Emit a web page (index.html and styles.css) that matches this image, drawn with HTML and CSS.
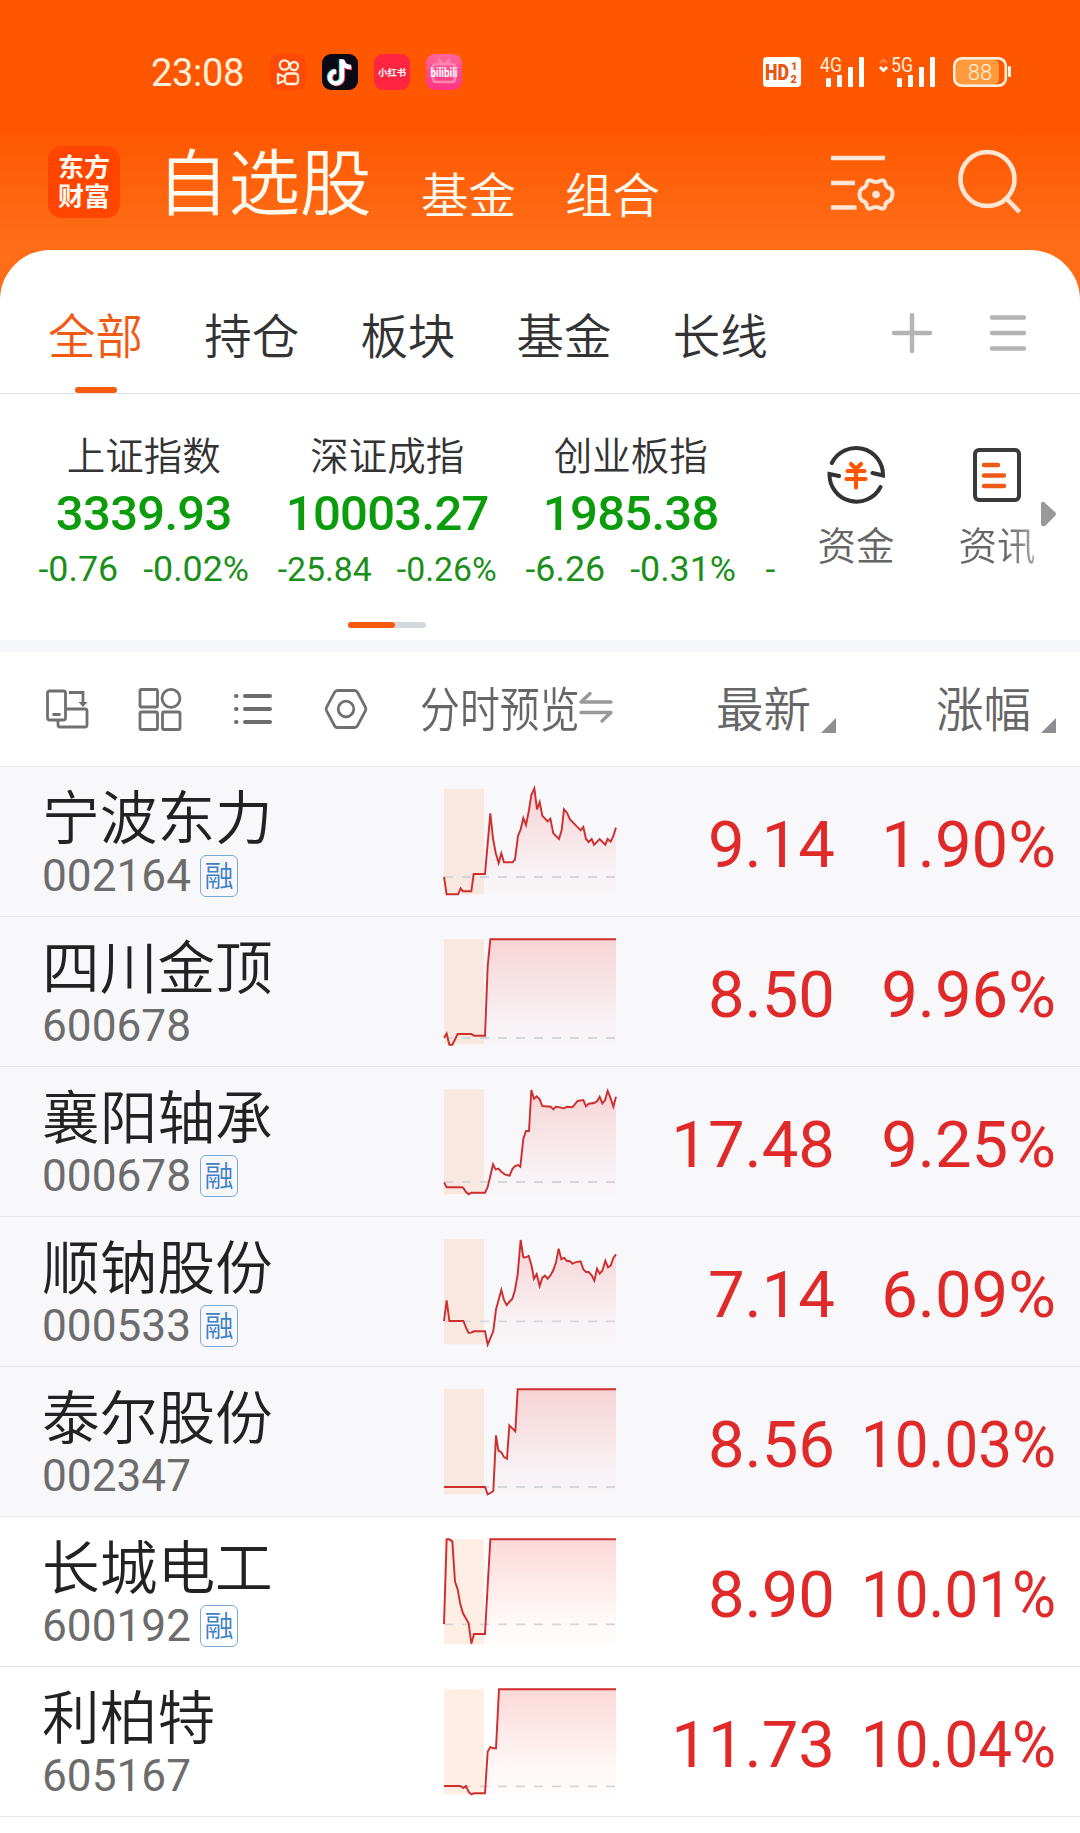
FILE: index.html
```html
<!DOCTYPE html>
<html lang="zh-CN">
<head>
    <meta charset="UTF-8">
    <meta name="viewport" content="width=device-width, initial-scale=1.0">
    <title>自选股</title>
    <link rel="stylesheet" href="styles.css">
</head>
<body>
    <header class="header">
        <div class="status-bar">
            <span class="time">23:08</span>
            <div class="app-icons">
                <svg class="app-icon" viewBox="0 0 36 36">
                    <rect width="36" height="36" rx="9" fill="#ff4a08"/>
                    <g fill="none" stroke="#fff0dc" stroke-width="2.300">
                        <circle cx="14.500" cy="11" r="4.700"/>
                        <circle cx="24" cy="12" r="4"/>
                        <rect x="15" y="19.500" width="13" height="10.500" rx="3"/>
                        <path d="M15 23l-7-3v9.500l7-3" stroke-linejoin="round"/>
                    </g>
                </svg>
                <svg class="app-icon" viewBox="0 0 36 36">
                    <rect width="36" height="36" rx="9" fill="#0b0a14"/>
                    <g fill="none" stroke-width="4.400">
                        <path d="M19 5v18a6 6 0 1 1-6-6M19 6c1 5 4 7 9 7" stroke="#3fe6e0"/>
                        <path d="M21 6v18a6 6 0 1 1-6-6M21 7c1 5 4 7 9 7" stroke="#f0405e"/>
                        <path d="M20 5.500v18a6 6 0 1 1-6-6M20 6c1 5 4 7 9 7" stroke="#fff"/>
                    </g>
                </svg>
                <svg class="app-icon" viewBox="0 0 36 36">
                    <rect width="36" height="36" rx="9" fill="#ff2440"/>
                    <text class="xhs-text" x="4" y="22">小红书</text>
                </svg>
                <svg class="app-icon" viewBox="0 0 36 36">
                    <linearGradient id="bili" x2="0" y2="1">
                        <stop offset="0" stop-color="#ff6699"/>
                        <stop offset="1" stop-color="#ff3385"/>
                    </linearGradient>
                    <rect width="36" height="36" rx="9" fill="url(#bili)"/>
                    <path d="M12 5l4 4M24 5l-4 4M10 10h16q3 0 3 3v12q0 3-3 3H10q-3 0-3-3V13q0-3 3-3z" fill="none" stroke="#ff86ae" stroke-width="2.500"/>
                    <text class="bili-text" x="4.500" y="23" textLength="27" lengthAdjust="spacingAndGlyphs">bilibili</text>
                </svg>
            </div>
            <svg class="signals" width="250" height="32" viewBox="0 0 250 32">
                <rect x="1" y="1" width="38" height="30" rx="4" fill="#fff"/>
                <g class="hd-text">
                    <text x="3" y="24" font-size="22" textLength="24" lengthAdjust="spacingAndGlyphs">HD</text>
                    <text x="29" y="14" font-size="11">1</text>
                    <text x="28.500" y="27" font-size="11">2</text>
                </g>
                <g fill="#fff">
                    <rect x="64" y="22" width="5" height="9" rx="1"/>
                    <rect x="75" y="19" width="5" height="12" rx="1"/>
                    <rect x="86" y="11" width="5" height="20" rx="1"/>
                    <rect x="97" y="1" width="5" height="30" rx="1"/>
                    <rect x="135" y="22" width="5" height="9" rx="1"/>
                    <rect x="146" y="19" width="5" height="12" rx="1"/>
                    <rect x="157" y="11" width="5" height="20" rx="1"/>
                    <rect x="168" y="1" width="5" height="30" rx="1"/>
                </g>
                <g class="net-text">
                    <text x="58" y="16" textLength="22" lengthAdjust="spacingAndGlyphs">4G</text>
                    <text x="129" y="16" textLength="22" lengthAdjust="spacingAndGlyphs">5G</text>
                </g>
                <path d="M118 7l3.500-3 3.500 3" fill="none" stroke="#ff7d3c" stroke-width="2.500"/>
                <path d="M118 11l3.500 3.500 3.500-3.500" fill="none" stroke="#fff" stroke-width="2.800"/>
                <rect x="194" y="4" width="43" height="24" rx="5" fill="#ff9a3c"/>
                <rect x="192.300" y="2.300" width="51.500" height="27.400" rx="7.500" fill="none" stroke="#fff0dc" stroke-width="2.700"/>
                <rect x="246" y="10" width="3" height="11" rx="1" fill="#fff0dc"/>
                <text class="battery-text" x="218" y="23.500">88</text>
            </svg>
        </div>
        <nav class="top-nav">
            <div class="logo">东方<br>财富</div>
            <a class="top-title">自选股</a>
            <a class="top-link">基金</a>
            <a class="top-link">组合</a>
            <svg class="icon-manage" width="64" height="62" viewBox="0 0 64 62" fill="none" stroke="#ffe6d4" stroke-width="4.700">
                <path d="M0 6h54M0 31h24M0 55.500h25.500"/>
                <path stroke-width="4" stroke-linejoin="round" d="M40 28.500q5 3 10 0q2.500-1 4 1.500q0 5 5 6.500q3 2 2.500 6t-2.500 6q-5 1.500-5 6.500q-1.500 2.500-4 1.500q-5-3-10 0q-2.500 1-4-1.500q0-5-5-6.500q-2.500-2-2.500-6t2.500-6q5-1.500 5-6.500q1.500-2.500 4-1.500z"/>
                <circle cx="45" cy="42.500" r="3.800" fill="#ffe6d4" stroke="none"/>
            </svg>
            <svg class="icon-search" width="64" height="66" viewBox="0 0 64 66" fill="none" stroke="#ffe6d4" stroke-width="4.600">
                <circle cx="29.500" cy="30" r="27"/>
                <path d="M48 49l13.500 14"/>
            </svg>
        </nav>
    </header>

    <main class="card">
        <div class="tabs">
            <a class="tab active">全部</a>
            <a class="tab">持仓</a>
            <a class="tab">板块</a>
            <a class="tab">基金</a>
            <a class="tab">长线</a>
            <svg class="icon-add" width="40" height="40" viewBox="0 0 40 40">
                <path d="M20 2v36M2 20h36" stroke="#b3b3b3" stroke-width="4.400" stroke-linecap="round"/>
            </svg>
            <svg class="icon-menu" width="38" height="40" viewBox="0 0 38 40">
                <path d="M3 4.500h32M3 20h32M3 35.500h32" stroke="#b3b3b3" stroke-width="4.400" stroke-linecap="round"/>
            </svg>
        </div>

        <section class="market">
            <div class="indices">
                <div class="index">
                    <div class="index-name">上证指数</div>
                    <div class="index-value">3339.93</div>
                    <div class="index-change"><span>-0.76</span><span>-0.02%</span></div>
                </div>
                <div class="index">
                    <div class="index-name">深证成指</div>
                    <div class="index-value">10003.27</div>
                    <div class="index-change small"><span>-25.84</span><span>-0.26%</span></div>
                </div>
                <div class="index">
                    <div class="index-name">创业板指</div>
                    <div class="index-value">1985.38</div>
                    <div class="index-change"><span>-6.26</span><span>-0.31%</span></div>
                </div>
                <div class="index-next">-</div>
            </div>
            <div class="shortcut">
                <svg width="60" height="60" viewBox="0 0 60 60" fill="none" stroke-linecap="round">
                    <g stroke="#333" stroke-width="4">
                        <path d="M5.800 18A27 27 0 0 1 57 30.500l-10.500-2.500"/>
                        <path d="M54.500 42A27 27 0 0 1 3.500 29l9.500 2"/>
                    </g>
                    <path d="M25 19l5 5 5-5M21.500 26h17M20.500 34h19M30 25v17.500" stroke="#ff5500" stroke-width="4.200"/>
                </svg>
                <span>资金</span>
            </div>
            <div class="shortcut last">
                <svg width="60" height="60" viewBox="0 0 60 60" fill="none" stroke-linecap="round">
                    <rect x="8" y="5" width="44" height="50" rx="4" stroke="#3a3a3a" stroke-width="4"/>
                    <path d="M17 20h14M17 30.500h20M17 41h20" stroke="#ee5a16" stroke-width="4.400"/>
                </svg>
                <span>资讯</span>
            </div>
            <svg class="icon-next" width="16" height="26" viewBox="0 0 16 26">
                <path d="M0 3q0-3 3-2l11 10q2 2 0 4L4 25q-4 1-4-2z" fill="#999"/>
            </svg>
            <div class="pager"><i></i></div>
        </section>

        <div class="list-head">
            <svg width="44" height="44" viewBox="0 0 44 44" fill="none" stroke="#707070" stroke-width="2.800">
                <rect x="2.500" y="4" width="18" height="29" rx="2"/>
                <path d="M7.500 27.500h8M13 34v4a2 2 0 0 0 2 2h25a2 2 0 0 0 2-2V24a2 2 0 0 0-2-2H21M24 5.500h14v11"/>
                <path d="M33.500 15h9l-4.500 5z" fill="#707070" stroke="none"/>
            </svg>
            <svg width="44" height="44" viewBox="0 0 44 44" fill="none" stroke="#707070" stroke-width="2.800">
                <rect x="2" y="2.500" width="17.500" height="17.500" rx="1.500"/>
                <circle cx="33" cy="11.300" r="9"/>
                <rect x="2" y="25" width="17.500" height="17.500" rx="1.500"/>
                <rect x="24.500" y="25" width="17.500" height="17.500" rx="1.500"/>
            </svg>
            <svg width="44" height="44" viewBox="0 0 44 44" stroke="#6c6c6c" stroke-width="4" stroke-linecap="round">
                <path d="M14 9h25M14 22h25M14 35h25M5 9h.5M5 22h.5M5 35h.5"/>
            </svg>
            <svg width="44" height="44" viewBox="0 0 44 44" fill="none" stroke="#707070" stroke-width="2.800">
                <path d="M13.500 3.500h17q2 0 3 1.800l8 15q.8 1.700 0 3.400l-8 15q-1 1.800-3 1.800h-17q-2 0-3-1.800l-8-15q-.8-1.700 0-3.400l8-15q1-1.800 3-1.800z"/>
                <circle cx="22" cy="22" r="7.800"/>
            </svg>
            <div class="preview"><span>分时预览</span></div>
            <svg class="icon-swap" width="36" height="34" viewBox="0 0 36 34" fill="none" stroke="#999" stroke-width="3.400" stroke-linecap="round" stroke-linejoin="round">
                <path d="M33 12H3l9-8.500M3 22.500h30l-9 8.500"/>
            </svg>
            <div class="sort sort-price"><span>最新</span><i></i></div>
            <div class="sort sort-change"><span>涨幅</span><i></i></div>
        </div>

        <div class="stocks" id="stocks"></div>
    </main>

    <script src="script.js"></script>
</body>
</html>
```

FILE: styles.css
```css
* {
    margin: 0;
    padding: 0;
    box-sizing: border-box;
}

body {
    width: 1080px;
    height: 1833px;
    overflow: hidden;
    background: #ff6d18;
    font-family: Roboto, 'Noto Sans CJK SC', sans-serif;
    font-weight: 350;
    color: #333;
}

svg {
    display: block;
    flex: none;
}

.header {
    height: 250px;
    background: linear-gradient(#ff5700 0, #ff5700 130px, #ff6d18 240px);
}

/* status bar */
.status-bar {
    display: flex;
    align-items: center;
    height: 124px;
    padding: 20px 68px 0 151px;
}

.time {
    width: 119px;
    padding-top: 1px;
    font-size: 38px;
    font-weight: 400;
    letter-spacing: -0.3px;
    color: #fff0dc;
}

.app-icons {
    display: flex;
    gap: 16px;
    flex: 1;
}

.app-icon {
    width: 36px;
    height: 36px;
}

.xhs-text {
    font-size: 9.4px;
    font-weight: 700;
    fill: #fff;
}

.bili-text {
    font-size: 13px;
    font-weight: 700;
    fill: #fff;
}

.hd-text {
    font-weight: 900;
    fill: #e8560f;
}

.net-text {
    font-size: 20px;
    font-weight: 400;
    fill: #fff0dc;
}

.signals {
    overflow: visible;
}

.battery-text {
    font-size: 22px;
    text-anchor: middle;
    fill: #fff0dc;
}

/* top navigation */
.top-nav {
    display: flex;
    align-items: flex-end;
    height: 100px;
    padding-left: 48px;
    color: #fffaf0;
}

.logo {
    width: 72px;
    height: 72px;
    margin: 0 37px 6px 0;
    padding-top: 8px;
    border-radius: 14px;
    background: #ff4500;
    font-size: 26px;
    font-weight: 700;
    line-height: 29px;
    text-align: center;
}

.top-title {
    width: 264px;
    margin-bottom: -3px;
    font-size: 71.5px;
    line-height: 84px;
}

.top-link {
    width: 144px;
    margin-bottom: -3px;
    font-size: 47.5px;
    line-height: 60px;
}

.icon-manage {
    margin: 0 63px 10px 122px;
    overflow: visible;
}

.icon-search {
    margin-bottom: 9px;
}

/* white card */
.card {
    height: 1583px;
    border-radius: 50px 50px 0 0;
    background: #fff;
}

.tabs {
    display: flex;
    align-items: center;
    height: 144px;
    padding: 22px 0 0 48px;
    border-bottom: 1px solid #e2e2e2;
}

.tab {
    display: flex;
    flex-direction: column;
    justify-content: flex-end;
    width: 95px;
    height: 121px;
    padding-bottom: 15px;
    margin-right: 61.2px;
    font-size: 47.5px;
    line-height: 80px;
    white-space: nowrap;
}

.tab.active {
    padding-bottom: 0;
    color: #f05a14;
}

.tab.active::after {
    content: "";
    width: 42px;
    height: 6px;
    margin: 9px 0 0 27px;
    border-radius: 3px;
    background: #f75a0c;
}

.icon-add {
    margin: 1px 57px 0 63px;
}

.icon-menu {
    margin-top: 1px;
}

/* indices */
.market {
    display: grid;
    grid-template-columns: 786px 140px 115px 39px;
    grid-template-rows: 228px 18px;
    height: 258px;
    border-bottom: 12px solid #f5f7fa;
}

.indices {
    display: flex;
    padding: 38px 0 0 22px;
}

.index {
    width: 243.5px;
    text-align: center;
}

.index-name {
    font-size: 38.5px;
    line-height: 50px;
}

.index-value {
    font-size: 49px;
    font-weight: 500;
    line-height: 64px;
    letter-spacing: -0.7px;
    color: #0b9c0b;
}

.index-change {
    display: flex;
    justify-content: center;
    gap: 25px;
    font-size: 35.8px;
    font-weight: 400;
    line-height: 46px;
    color: #1a8f1a;
}

.index-change.small {
    font-size: 33.8px;
    line-height: 47px;
}

.index-next {
    padding: 114px 0 0 13px;
    font-size: 35.8px;
    font-weight: 400;
    line-height: 46px;
    color: #1a8f1a;
}

.shortcut {
    display: flex;
    flex-direction: column;
    align-items: center;
    padding-top: 51px;
    font-size: 38.5px;
    line-height: 50px;
    color: #666;
}

.shortcut span {
    margin-top: 17px;
}

.shortcut.last {
    width: 142px;
}

.shortcut.last span {
    background: linear-gradient(to right, #666 60%, #aaa);
    background-clip: text;
    -webkit-background-clip: text;
    color: transparent;
}

.icon-next {
    margin-top: 107px;
}

.pager {
    grid-column: 1;
    width: 78px;
    height: 6px;
    margin-left: 348px;
    border-radius: 3px;
    background: #d5d9dd;
}

.pager i {
    display: block;
    width: 47px;
    height: 6px;
    border-radius: 3px;
    background: #f75a0c;
}

/* list header */
.list-head {
    display: flex;
    align-items: center;
    gap: 49px;
    height: 115px;
    padding-left: 45px;
    border-bottom: 1px solid #e8e8ea;
    color: #666;
    font-size: 47.5px;
    line-height: 60px;
}

.preview {
    width: 160px;
    margin-left: 3px;
    padding-top: 4px;
    white-space: nowrap;
}

.preview span {
    display: inline-block;
    transform: scaleX(0.84);
    transform-origin: left;
}

.icon-swap {
    margin: 0 0 4px -51px;
}

.sort {
    display: flex;
    align-items: flex-end;
    gap: 10px;
    white-space: nowrap;
}

.sort span {
    margin-bottom: -3px;
}

.sort i {
    border-left: 15px solid transparent;
    border-bottom: 15px solid #8e8e93;
    margin-bottom: 5px;
}

.sort-price {
    margin-left: 53px;
}

.sort-change {
    margin-left: 51px;
}

/* stock rows */
.stock {
    display: grid;
    grid-template-columns: 401px 172px 219px 221px;
    height: 150px;
    padding-left: 43px;
    border-bottom: 1px solid #e8e8ea;
}

.stock.pinned {
    background: #f8f8fb;
}

.stock-name {
    margin-top: 22px;
    margin-left: -1px;
    font-size: 57.7px;
    line-height: 60px;
    color: #222;
}

.stock-code {
    display: flex;
    align-items: center;
    gap: 9px;
    margin-top: 4px;
    margin-left: -1px;
    font-size: 44.2px;
    font-weight: 400;
    line-height: 46px;
    color: #6c6c6c;
}

.badge {
    width: 38px;
    height: 42px;
    border: 1.5px solid #7aaad8;
    border-radius: 6px;
    font-size: 29px;
    font-weight: 350;
    line-height: 43px;
    display: flex;
    justify-content: center;
    color: #3d80c4;
}

.chart {
    margin-top: 19px;
    overflow: visible;
}

.price,
.change {
    font-size: 65.2px;
    font-weight: 400;
    line-height: 157px;
    height: 149px;
    text-align: right;
    color: #e02a2a;
}

.change.wide {
    transform: scaleX(0.922);
    transform-origin: right;
}
```

FILE: script.js
```js
// points are [x, y] pairs on a 516 x 330 canvas, base is the previous close
const stocks = [
    { name: '宁波东力', code: '002164', margin: true, pinned: true, price: '9.14', change: '1.90%', base: 273,
      points: '0,273 8,325 42,325 50,307 57,316 82,316 89,264 123,264 139,82 147,157 155,200 164,231 172,202 180,229 206,229 213,220 222,150 230,130 238,96 246,117 255,72 262,27 271,7 279,70 287,48 295,89 311,106 319,98 328,142 345,159 353,132 360,70 369,80 378,100 410,133 418,123 426,159 434,168 443,159 450,176 467,159 484,176 491,159 500,167 508,150 516,125' },
    { name: '四川金顶', code: '600678', pinned: true, price: '8.50', change: '9.96%', base: 306,
      points: '0,305 8,293 16,326 25,326 41,294 82,294 90,299 123,299 131,92 139,10 516,10' },
    { name: '襄阳轴承', code: '000678', margin: true, pinned: true, price: '17.48', change: '9.25%', base: 288,
      points: '0,289 8,304 54,304 58,306 66,318 74,325 82,320 123,320 131,303 139,270 147,235 155,250 163,248 172,257 184,266 197,269 205,249 213,240 222,237 229,242 238,158 246,135 255,135 262,12 270,38 278,31 287,40 295,60 320,62 328,70 336,62 360,67 369,62 385,64 401,45 418,42 426,61 434,53 450,51 460,45 467,32 475,52 483,43 491,15 499,34 508,62 516,32' },
    { name: '顺钠股份', code: '000533', margin: true, pinned: true, price: '7.14', change: '6.09%', base: 256,
      points: '0,255 8,193 16,255 58,255 66,275 74,291 82,290 90,286 123,286 131,326 148,285 156,220 172,162 180,192 188,207 205,188 213,162 221,115 230,12 238,64 246,64 254,60 263,90 270,128 278,114 287,150 295,125 303,119 311,128 320,117 328,102 336,79 344,38 352,70 360,65 369,75 377,75 385,83 394,79 410,76 418,100 426,108 434,108 443,118 451,134 459,98 467,113 475,104 484,74 492,94 500,89 508,66 516,55' },
    { name: '泰尔股份', code: '002347', pinned: true, price: '8.56', change: '10.03%', base: 303,
      points: '0,303 123,303 131,325 139,321 148,315 156,148 163,193 172,199 180,213 189,218 196,118 214,136 221,10 516,10' },
    { name: '长城电工', code: '600192', margin: true, price: '8.90', change: '10.01%', base: 265,
      points: '0,264 8,10 16,10 25,16 33,137 41,160 49,205 57,232 74,262 82,323 90,294 123,294 131,150 139,10 516,10' },
    { name: '利柏特', code: '605167', price: '11.73', change: '10.04%', base: 301,
      points: '0,300 49,300 58,306 66,300 74,318 82,325 90,322 123,322 131,197 139,183 147,187 156,187 165,10 516,10' }
];

function drawChart(stock, i) {
    // the fill covers only the trading session, right of the auction block
    const session = stock.points.split(' ').filter(p => parseInt(p) >= 123).join(' ');
    return `<svg class="chart" width="172" height="110" viewBox="0 0 516 330">
        <linearGradient id="fill${i}" gradientUnits="userSpaceOnUse" x1="0" y1="10" x2="0" y2="325">
            <stop offset="0" stop-color="#f5413f" stop-opacity="0.2"/>
            <stop offset="0.8" stop-color="#f5413f" stop-opacity="0.03"/>
            <stop offset="1" stop-color="#f5713f" stop-opacity="0.02"/>
        </linearGradient>
        <rect x="0" y="10" width="120" height="315" fill="#ff7828" fill-opacity="0.13"/>
        <polygon points="123,325 ${session} 516,325" fill="url(#fill${i})"/>
        <path d="M0 ${stock.base}H516" stroke="#d5d6da" stroke-width="5.500" stroke-dasharray="27 27"/>
        <polyline points="${stock.points}" fill="none" stroke="#cf2e2e" stroke-width="5.800"/>
    </svg>`;
}

document.getElementById('stocks').innerHTML = stocks.map((s, i) => `
    <div class="stock ${s.pinned ? 'pinned' : ''}">
        <div>
            <div class="stock-name">${s.name}</div>
            <div class="stock-code">${s.code}${s.margin ? '<span class="badge">融</span>' : ''}</div>
        </div>
        ${drawChart(s, i)}
        <div class="price">${s.price}</div>
        <div class="change ${s.change.length > 5 ? 'wide' : ''}">${s.change}</div>
    </div>`).join('');
```
